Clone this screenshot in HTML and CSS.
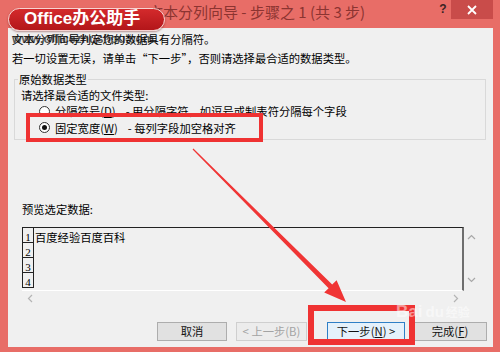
FILE: index.html
```html
<!DOCTYPE html>
<html lang="zh-CN">
<head>
<meta charset="utf-8">
<title>文本分列向导</title>
<link rel="stylesheet" href="styles.css">
</head>
<body>
<div class="window">
  <div class="titlebar">
    <span class="title">文本分列向导 - 步骤之 1 (共 3 步)</span>
    <span class="help">?</span>
    <span class="close">
      <svg width="12" height="12" viewBox="0 0 12 12"><path d="M2 2 L10 10 M10 2 L2 10" stroke="#fff" stroke-width="1.8" fill="none"/></svg>
    </span>
  </div>
  <div class="client">
    <p class="line line1">文本分列向导判定您的数据具有分隔符。<span class="wm">www.officezhushou.com</span></p>
    <p class="line">若一切设置无误，请单击“下一步”，否则请选择最合适的数据类型。</p>
    <div class="group">
      <div class="group-title">原始数据类型</div>
      <div class="prompt">请选择最合适的文件类型:</div>
      <div class="radio r1"><span class="circle"></span><span class="opt">分隔符号(<u>D</u>)</span><span class="desc">- 用分隔字符，如逗号或制表符分隔每个字段</span></div>
      <div class="radio r2"><span class="circle checked"></span><span class="opt">固定宽度(<u>W</u>)</span><span class="desc">- 每列字段加空格对齐</span></div>
    </div>
    <div class="preview-label">预览选定数据:</div>
    <div class="preview-wrap">
      <div class="preview">
        <div class="row"><span class="num">1</span><span class="cell">百度经验百度百科</span></div>
        <div class="row"><span class="num">2</span><span class="cell"></span></div>
        <div class="row"><span class="num">3</span><span class="cell"></span></div>
        <div class="row"><span class="num">4</span><span class="cell"></span></div>
      </div>
      <div class="vscroll">
        <svg width="9" height="6" viewBox="0 0 9 6"><path d="M1 5 L4.5 1.5 L8 5" stroke="#a8a8a8" stroke-width="1.2" fill="none"/></svg>
        <svg width="9" height="6" viewBox="0 0 9 6"><path d="M1 1 L4.5 4.5 L8 1" stroke="#a8a8a8" stroke-width="1.2" fill="none"/></svg>
      </div>
    </div>
    <div class="hscroll">
      <svg width="6" height="9" viewBox="0 0 6 9"><path d="M5 1 L1.5 4.5 L5 8" stroke="#b4b4b4" stroke-width="1.2" fill="none"/></svg>
      <svg width="6" height="9" viewBox="0 0 6 9"><path d="M1 1 L4.5 4.5 L1 8" stroke="#b4b4b4" stroke-width="1.2" fill="none"/></svg>
    </div>
    <div class="buttons">
      <button class="btn b-cancel">取消</button>
      <button class="btn b-back" disabled>&lt; 上一步(B)</button>
      <button class="btn b-next">下一步(<u>N</u>) &gt;</button>
      <button class="btn b-finish">完成(<u>F</u>)</button>
    </div>
  </div>

  <div class="logo">Office办公助手</div>
  <div class="mark mark1"></div>
  <div class="mark mark2"></div>
  <div class="baidu"><span class="bai">Bai</span><span class="du">du</span><span class="jy">经验</span></div>
  <svg class="arrow" width="500" height="352" viewBox="0 0 500 352">
    <polygon points="193.4,148.6 332.2,284.6 336.6,280.2 346,302 324.2,292.6 328.6,288.2 192.6,149.4" fill="#f03535"/>
  </svg>
</div>
</body>
</html>
```

FILE: styles.css
```css
* { box-sizing: border-box; }

html, body {
  margin: 0;
  padding: 0;
}

body {
  width: 500px;
  height: 352px;
  overflow: hidden;
  font-family: "Noto Sans CJK SC", "Liberation Sans", sans-serif;
  color: #000;
}

.window {
  position: relative;
  width: 500px;
  height: 352px;
  background: #e86d67;
  display: flex;
  flex-direction: column;
}

.titlebar {
  height: 28px;
  display: flex;
  align-items: flex-start;
  flex: 0 0 auto;
}

.title {
  padding-left: 148px;
  line-height: 24px;
  font-size: 15px;
  color: #8c3431;
  white-space: nowrap;
}

.help {
  margin-left: auto;
  width: 14px;
  margin-right: 1px;
  line-height: 19px;
  font-family: "Liberation Sans", sans-serif;
  font-weight: bold;
  font-size: 12px;
  color: #3a2323;
  text-align: center;
}

.close {
  width: 42px;
  height: 19px;
  margin-right: 7px;
  background: #c94c4a;
  display: flex;
  align-items: center;
  justify-content: center;
}

.client {
  flex: 1;
  margin: 0 7px 5px 8px;
  background: #f0f0f0;
  padding: 0 0 0 4px;
  font-size: 11.3px;
  display: flex;
  flex-direction: column;
}

.line {
  margin: 0;
  line-height: 19px;
  white-space: nowrap;
}

.line1 {
  margin-top: 2px;
  position: relative;
}

.wm {
  position: absolute;
  left: 0;
  top: 0;
  font-family: "Liberation Sans", sans-serif;
  font-weight: bold;
  font-size: 12.5px;
  letter-spacing: -0.2px;
  color: rgba(20, 20, 20, 0.7);
}

.group {
  margin: 11px 7px 0 2px;
  height: 61px;
  border: 1px solid #d9d9d9;
  padding: 0 0 0 6px;
}

.group-title {
  margin: -8px 0 0 -3px;
  padding: 0 1px;
  width: fit-content;
  background: #f0f0f0;
  line-height: 15px;
}

.prompt {
  margin-top: 1px;
  line-height: 15px;
}

.radio {
  display: flex;
  align-items: center;
  padding-left: 18px;
  white-space: nowrap;
}

.r1 { height: 16px; }
.r2 { height: 17px; }

.circle {
  width: 11px;
  height: 11px;
  border-radius: 50%;
  border: 1px solid #333;
  background: #fff;
  margin-right: 5px;
  display: flex;
  align-items: center;
  justify-content: center;
}

.circle.checked::after {
  content: "";
  width: 5px;
  height: 5px;
  border-radius: 50%;
  background: #111;
}

.desc {
  margin-left: 10px;
}

.preview-label {
  margin: 62px 0 0 10px;
  line-height: 14px;
}

.preview-wrap {
  margin: 11px 0 0 10px;
  display: flex;
  height: 64px;
}

.preview {
  width: 442px;
  height: 64px;
  border-top: 1px solid #222;
  border-right: 2px solid #6e6e6e;
  border-bottom: 1px solid #fff;
  overflow: hidden;
}

.row {
  display: flex;
  height: 15px;
}

.num {
  width: 12px;
  flex: 0 0 12px;
  border-left: 1px solid #222;
  border-right: 1px solid #222;
  border-bottom: 1px solid #222;
  font-family: "Liberation Serif", serif;
  font-size: 11px;
  line-height: 12px;
  padding-top: 3px;
  text-align: center;
}

.cell {
  padding-left: 1px;
  line-height: 12px;
  padding-top: 3px;
  font-size: 11.3px;
}

.vscroll {
  width: 14px;
  display: flex;
  flex-direction: column;
  align-items: center;
  justify-content: space-between;
  padding: 7px 0 8px 0;
}

.hscroll {
  height: 14px;
  display: flex;
  align-items: center;
  justify-content: space-between;
  padding: 0 34px 0 15px;
}

.buttons {
  margin-top: 17px;
  display: flex;
  justify-content: flex-end;
  padding-right: 6px;
}

.btn {
  height: 19px;
  padding: 0;
  font-family: "Noto Sans CJK SC", "Liberation Sans", sans-serif;
  font-size: 11.3px;
  line-height: 17px;
  color: #111;
  background: #e1e1e1;
  border: 1px solid #adadad;
  border-radius: 0;
}

.b-cancel { width: 70px; }
.b-back {
  width: 71px;
  margin-left: 9px;
  color: #a3a3a3;
  background: #ececec;
  border-color: #cfcfcf;
}
.b-next {
  width: 78px;
  margin-left: 20px;
  border-color: #2f7fc6;
  background: #e5f1fb;
}
.b-finish {
  width: 74px;
  margin-left: 8px;
}

.logo {
  position: absolute;
  left: 8px;
  top: 8px;
  width: 157px;
  height: 23px;
  border-radius: 12px;
  background: linear-gradient(#d42a2c, #b3161a);
  border: 1.5px solid #f7d3d1;
  box-shadow: 0 1px 2px rgba(90, 0, 0, 0.4);
  color: #fff;
  font-family: "Liberation Sans", "Noto Sans CJK SC", sans-serif;
  font-weight: bold;
  font-size: 17px;
  line-height: 20px;
  padding-left: 15px;
  white-space: nowrap;
}

.mark {
  position: absolute;
  border-style: solid;
  border-color: #ef3232;
}

.mark1 {
  left: 26px;
  top: 113px;
  width: 237px;
  height: 29px;
  border-width: 4px;
}

.mark2 {
  left: 308px;
  top: 305px;
  width: 107px;
  height: 40px;
  border-width: 6px;
}

.baidu {
  position: absolute;
  left: 396px;
  top: 302px;
  color: rgba(255, 255, 255, 0.5);
  font-family: "Liberation Sans", sans-serif;
  font-weight: bold;
  white-space: nowrap;
}

.bai { font-size: 17px; }
.du { font-size: 15px; margin-left: 3px; }
.jy { font-size: 12px; margin-left: 2px; font-family: "Noto Sans CJK SC", sans-serif; }

.arrow {
  position: absolute;
  left: 0;
  top: 0;
  pointer-events: none;
}
```
